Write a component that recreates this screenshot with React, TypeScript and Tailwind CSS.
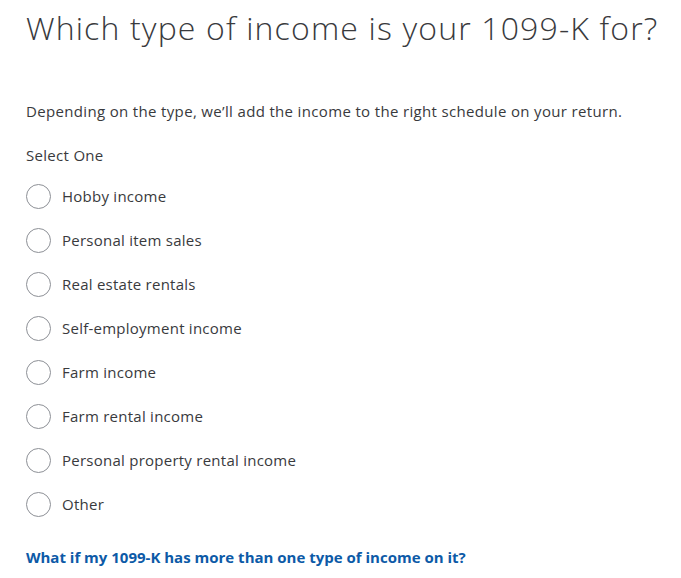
import React from 'react';

const options = [
    'Hobby income',
    'Personal item sales',
    'Real estate rentals',
    'Self-employment income',
    'Farm income',
    'Farm rental income',
    'Personal property rental income',
    'Other',
];

export default function App() {
    return (
        <div className="w-[681px] h-[578px] bg-white px-[26px] text-[#393a3d] font-['Open_Sans',sans-serif] overflow-hidden">
            <h1 className="pt-[8px] text-[32px] leading-[40px] font-light tracking-[1.15px] whitespace-nowrap">
                Which type of income is your 1099-K for?
            </h1>

            <p className="mt-[52px] text-[15px] leading-[22px] tracking-[0.34px]">
                Depending on the type, we’ll add the income to the right schedule on your return.
            </p>

            <div className="mt-[22px] text-[15px] leading-[22px] font-medium tracking-[0.3px]">Select One</div>

            <div className="mt-[8px] flex flex-col">
                {options.map(opt => (
                    <label key={opt} className="h-[44px] flex items-center gap-[11px] cursor-pointer">
                        <span className="w-[25px] h-[25px] rounded-full border border-[#8d9096] shrink-0"></span>
                        <span className="text-[15px] leading-[22px] tracking-[0.25px]">{opt}</span>
                    </label>
                ))}
            </div>

            <a href="#" className="block mt-[20px] text-[15px] leading-[22px] font-bold text-[#0d5aa7]">
                What if my 1099-K has more than one type of income on it?
            </a>
        </div>
    );
}
